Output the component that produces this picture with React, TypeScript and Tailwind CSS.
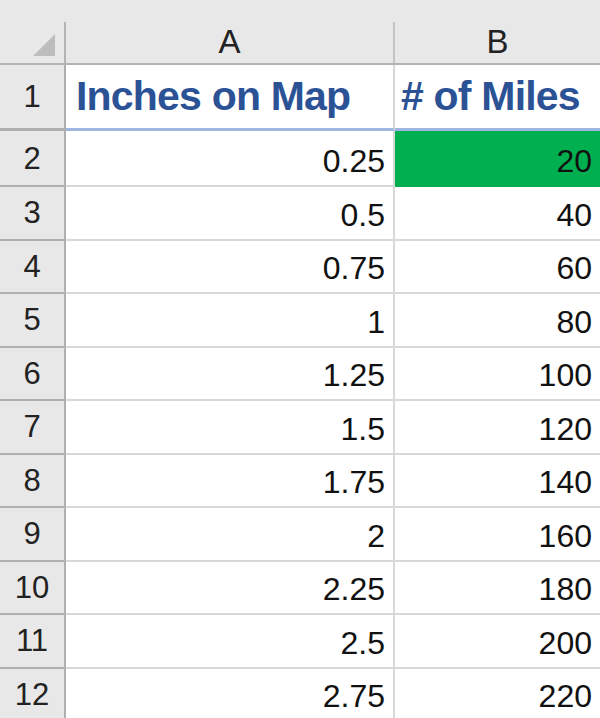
import React from "react";

const rows = [
  { n: 2, a: "0.25", b: "20", hi: true },
  { n: 3, a: "0.5", b: "40" },
  { n: 4, a: "0.75", b: "60" },
  { n: 5, a: "1", b: "80" },
  { n: 6, a: "1.25", b: "100" },
  { n: 7, a: "1.5", b: "120" },
  { n: 8, a: "1.75", b: "140" },
  { n: 9, a: "2", b: "160" },
  { n: 10, a: "2.25", b: "180" },
  { n: 11, a: "2.5", b: "200" },
  { n: 12, a: "2.75", b: "220" },
];

const CornerMark = () => (
  <svg width="22" height="22" viewBox="0 0 22 22">
    <polygon points="0,22 22,22 22,0" fill="#bdbdbd" />
  </svg>
);

export default function App() {
  return (
    <div className="w-[600px] h-[718px] overflow-hidden bg-white font-['Liberation_Sans',Arial,sans-serif] text-[#111]">
      {/* column headers */}
      <div className="flex h-[65px] bg-[#e8e8e8] border-b-2 border-[#b3b3b3]">
        <div className="w-[64px] flex items-end justify-end pr-[9px] pb-[7px]">
          <CornerMark />
        </div>
        <div className="w-[2px] h-[41px] self-end bg-[#b3b3b3]" />
        <div className="w-[327px] flex items-end justify-center pb-[5px] text-[33px] leading-none text-[#222]">
          A
        </div>
        <div className="w-[2px] h-[41px] self-end bg-[#c4c4c4]" />
        <div className="flex-1 flex items-end justify-center pb-[5px] text-[33px] leading-none text-[#222]">
          B
        </div>
      </div>

      {/* row 1 - headings */}
      <div className="flex h-[66px]">
        <div className="w-[66px] flex items-center justify-center bg-[#e8e8e8] border-r-2 border-b-[3px] border-[#aeaeae] text-[31px] leading-none text-[#222]">
          1
        </div>
        <div className="w-[329px] flex items-center pl-[10px] border-r-2 border-r-[#d6d6d6] border-b-[3px] border-b-[#9fb6e0] text-[41px] tracking-[-0.8px] font-bold leading-none text-[#2c5296]">
          Inches on Map
        </div>
        <div className="flex-1 flex items-center pl-[6px] border-b-[3px] border-[#9fb6e0] text-[41px] tracking-[-0.8px] font-bold leading-none text-[#2c5296] whitespace-nowrap">
          # of Miles
        </div>
      </div>

      {/* data rows */}
      {rows.map((r) => (
        <div key={r.n} className={`flex ${r.n === 2 ? "h-[56px]" : "h-[53.5px]"}`}>
          <div className="w-[66px] flex items-center justify-center bg-[#e8e8e8] border-r-2 border-b-2 border-[#b0b0b0] text-[31px] leading-none text-[#222]">
            {r.n}
          </div>
          <div className="w-[329px] flex items-end justify-end pr-[8px] pb-[8px] border-r-2 border-b-2 border-[#d8d8d8] text-[32px] leading-none">
            {r.a}
          </div>
          <div
            className={`flex-1 flex items-end justify-end pr-[8px] pb-[8px] border-b-2 text-[32px] leading-none ${
              r.hi ? "bg-[#00b050] border-[#00b050]" : "border-[#d8d8d8]"
            }`}
          >
            {r.b}
          </div>
        </div>
      ))}
    </div>
  );
}
